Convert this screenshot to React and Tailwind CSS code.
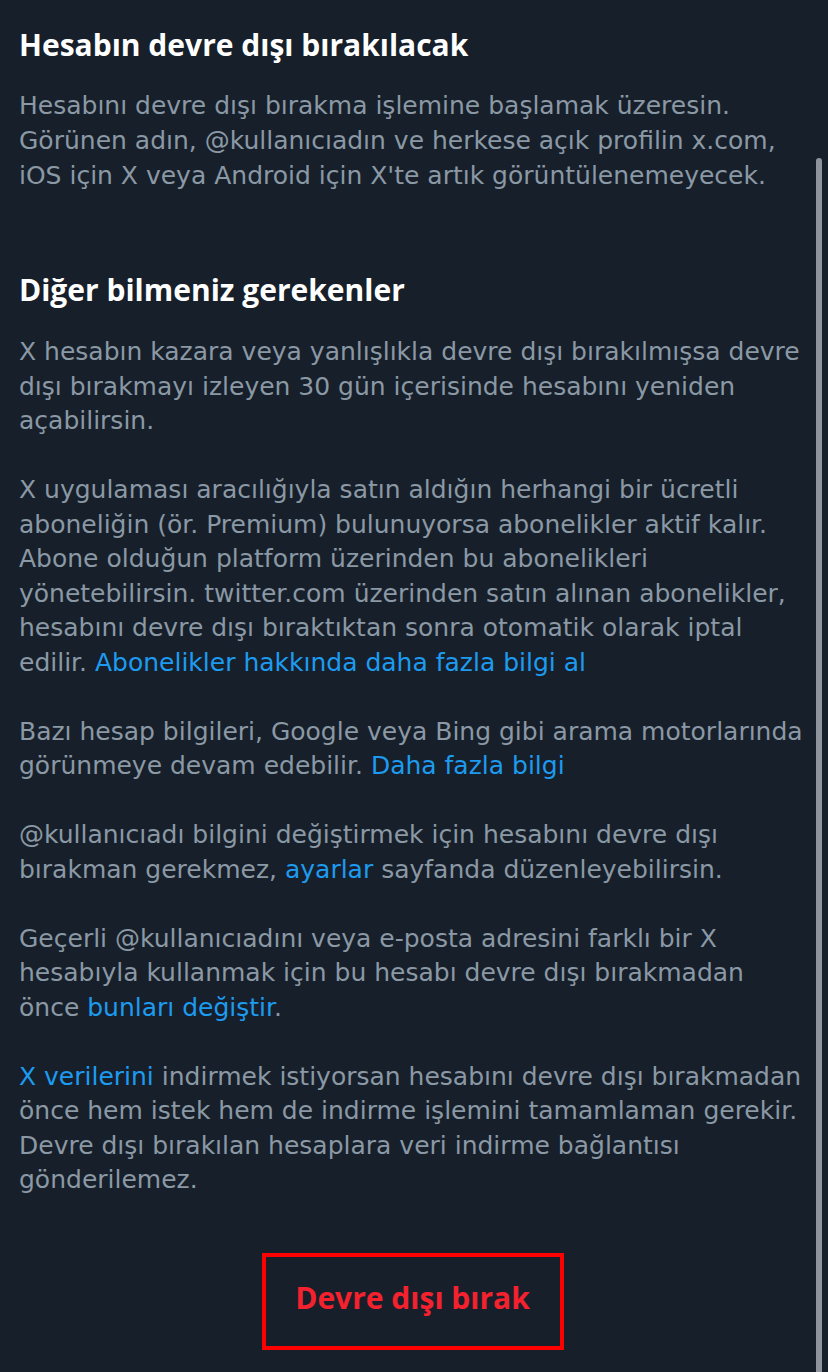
const paragraflar = [
  [{ t: "X hesabın kazara veya yanlışlıkla devre dışı bırakılmışsa devre dışı bırakmayı izleyen 30 gün içerisinde hesabını yeniden açabilirsin." }],
  [
    { t: "X uygulaması aracılığıyla satın aldığın herhangi bir ücretli aboneliğin (ör. Premium) bulunuyorsa abonelikler aktif kalır. Abone olduğun platform üzerinden bu abonelikleri yönetebilirsin. twitter.com üzerinden satın alınan abonelikler, hesabını devre dışı bıraktıktan sonra otomatik olarak iptal edilir. " },
    { t: "Abonelikler hakkında daha fazla bilgi al", link: true },
  ],
  [
    { t: "Bazı hesap bilgileri, Google veya Bing gibi arama motorlarında görünmeye devam edebilir. " },
    { t: "Daha fazla bilgi", link: true },
  ],
  [
    { t: "@kullanıcıadı bilgini değiştirmek için hesabını devre dışı bırakman gerekmez, " },
    { t: "ayarlar", link: true },
    { t: " sayfanda düzenleyebilirsin." },
  ],
  [
    { t: "Geçerli @kullanıcıadını veya e-posta adresini farklı bir X hesabıyla kullanmak için bu hesabı devre dışı bırakmadan önce " },
    { t: "bunları değiştir", link: true },
    { t: "." },
  ],
  [
    { t: "X verilerini", link: true },
    { t: " indirmek istiyorsan hesabını devre dışı bırakmadan önce hem istek hem de indirme işlemini tamamlaman gerekir. Devre dışı bırakılan hesaplara veri indirme bağlantısı gönderilemez." },
  ],
]

function Paragraf({ parcalar, className = "leading-[34.5px]" }) {
  return (
    <p
      className={`text-[25px] text-[#8b98a5] ${className}`}
      style={{ fontFamily: "'DejaVu Sans', 'Open Sans', sans-serif" }}
    >
      {parcalar.map((p, i) =>
        p.link ? (
          <span key={i} className="text-[#1d9bf0]">{p.t}</span>
        ) : (
          <span key={i}>{p.t}</span>
        )
      )}
    </p>
  )
}

export default function App() {
  return (
    <div
      className="relative h-[1372px] w-full overflow-hidden bg-[#17202a]"
      style={{ fontFamily: "'Open Sans', Roboto, sans-serif" }}
    >
      {/* kaydırma çubuğu */}
      <div className="absolute right-[6px] top-[158px] bottom-0 w-[6px] rounded-t-full bg-[#8d949c]" />

      <div className="pl-[19px] pr-[22px] pt-[27px]">
        <h1 className="text-[30px] font-bold leading-[36px] text-white">
          Hesabın devre dışı bırakılacak
        </h1>
        <Paragraf
          className="mt-[25px] leading-[35px]"
          parcalar={[{ t: "Hesabını devre dışı bırakma işlemine başlamak üzeresin. Görünen adın, @kullanıcıadın ve herkese açık profilin x.com, iOS için X veya Android için X'te artık görüntülenemeyecek." }]}
        />

        <h2 className="mt-[79px] text-[30px] font-bold leading-[36px] text-white">
          Diğer bilmeniz gerekenler
        </h2>
        <div className="mt-[27px] flex flex-col gap-[34.5px]">
          {paragraflar.map((p, i) => (
            <Paragraf key={i} parcalar={p} />
          ))}
        </div>

        <div className="mt-[55px] flex justify-center">
          <div className="flex h-[97px] w-[302px] items-center justify-center border-[4px] border-[#ff0000] pb-[8px]">
            <span className="text-[30px] font-bold text-[#f4212e]">Devre dışı bırak</span>
          </div>
        </div>
      </div>
    </div>
  )
}
